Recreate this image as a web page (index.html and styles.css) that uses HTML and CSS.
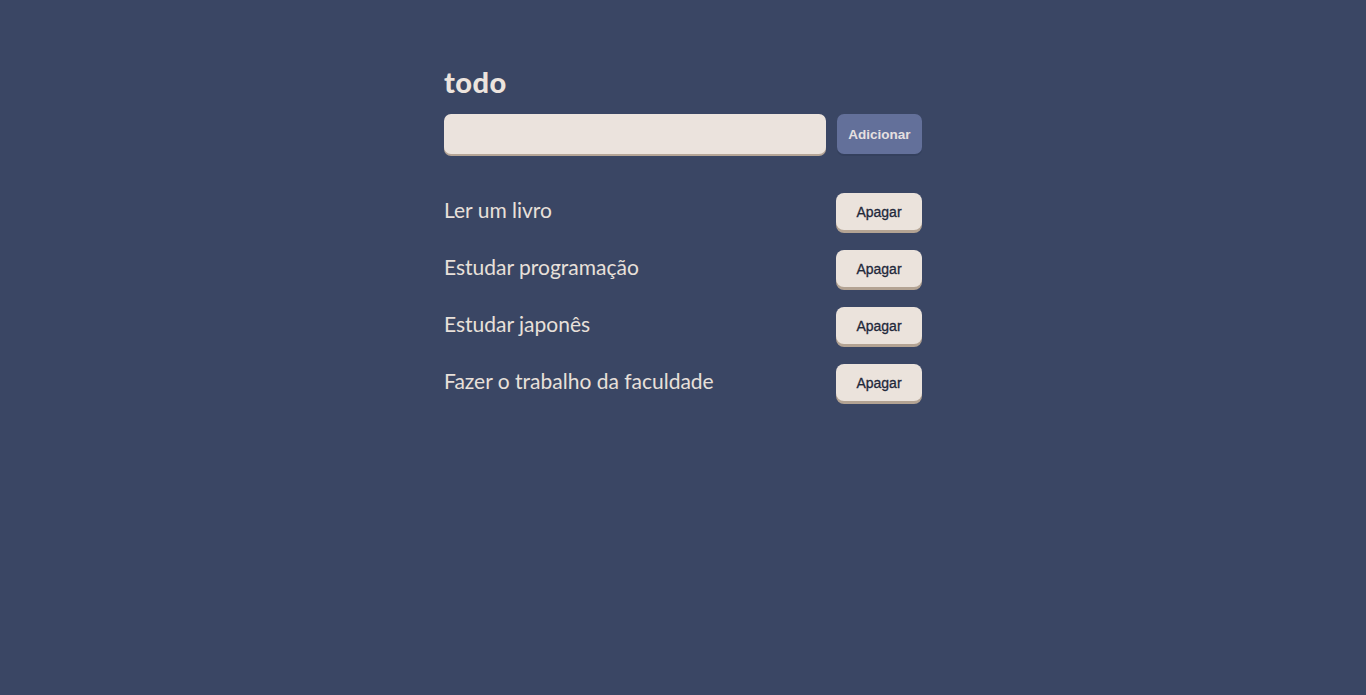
FILE: index.html
```html
<!DOCTYPE html>
<html lang="pt">
<head>
<meta charset="utf-8">
<title>todo</title>
<link rel="stylesheet" href="styles.css">
</head>
<body>
<main class="app">
  <h1 class="title">todo</h1>
  <form class="add-form">
    <input class="add-input" type="text">
    <button class="add-btn" type="button">Adicionar</button>
  </form>
  <ul class="list">
    <li class="item"><span class="item-text">Ler um livro</span><button class="del-btn" type="button">Apagar</button></li>
    <li class="item"><span class="item-text">Estudar programação</span><button class="del-btn" type="button">Apagar</button></li>
    <li class="item"><span class="item-text">Estudar japonês</span><button class="del-btn" type="button">Apagar</button></li>
    <li class="item"><span class="item-text">Fazer o trabalho da faculdade</span><button class="del-btn" type="button">Apagar</button></li>
  </ul>
</main>
</body>
</html>
```
FILE: styles.css
```css
* { box-sizing: border-box; }
html, body { margin: 0; padding: 0; }
body {
  background: #3a4664;
  min-height: 695px;
  font-family: "Lato", "Noto Sans", sans-serif;
}
.app {
  width: 478px;
  margin: 0 auto;
  padding-top: 64px;
}
.title {
  margin: 0 0 15px;
  color: #ece4de;
  font-size: 29px;
  font-weight: 900;
  line-height: 35px;
  letter-spacing: 0.5px;
}
.add-form {
  display: flex;
  gap: 11px;
  margin-bottom: 39px;
}
.add-input {
  width: 382px;
  height: 40px;
  border: none;
  border-radius: 7px;
  background: #ebe3dd;
  box-shadow: 0 2px 0 #b5a596;
  outline: none;
}
.add-btn {
  width: 85px;
  height: 40px;
  border: none;
  border-radius: 7px;
  background: #63709a;
  color: #e6e0e0;
  font-family: "Liberation Sans", Arial, sans-serif;
  font-weight: 700;
  font-size: 13.5px;
  padding: 0;
  box-shadow: 0 2px 0 #34405d;
}
.list {
  list-style: none;
  margin: 0;
  padding: 0;
}
.item {
  display: flex;
  justify-content: space-between;
  align-items: center;
  height: 40px;
  margin-bottom: 17px;
}
.item-text {
  color: #e8e0da;
  font-size: 21px;
  padding-bottom: 8px;
}
.del-btn {
  width: 86px;
  height: 37px;
  border: none;
  border-radius: 8px;
  background: #ebe3dc;
  color: #22283a;
  font-family: "Liberation Sans", Arial, sans-serif;
  font-size: 14px;
  padding: 0;
  box-shadow: 0 3px 0 #b3a393;
  margin-bottom: 3px;
  -webkit-text-stroke: 0.3px #22283a;
}
```
